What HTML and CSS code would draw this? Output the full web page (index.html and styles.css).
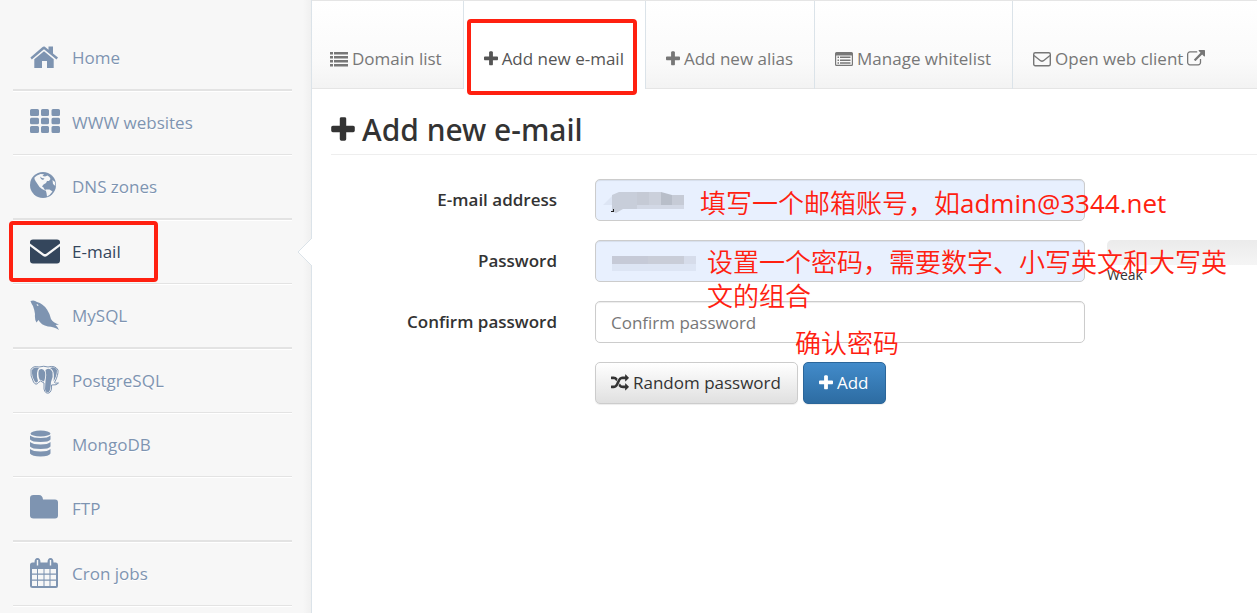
FILE: index.html
```html
<!DOCTYPE html>
<html lang="en">
<head>
<meta charset="UTF-8" />
<meta name="viewport" content="width=device-width, initial-scale=1" />
<title>Add new e-mail</title>
<link rel="stylesheet" href="styles.css">
</head>
<body>

<!-- shared icons -->
<svg class="sprite" aria-hidden="true">
  <symbol id="plus" viewBox="0 0 1408 1792"><path d="M1408 736v192q0 40-28 68t-68 28h-416v416q0 40-28 68t-68 28h-192q-40 0-68-28t-28-68v-416h-416q-40 0-68-28t-28-68v-192q0-40 28-68t68-28h416v-416q0-40 28-68t68-28h192q40 0 68 28t28 68v416h416q40 0 68 28t28 68z"/></symbol>
  <symbol id="list" viewBox="0 0 18 18"><path d="M0 2h3v2.500H0zM4 2h14v2.500H4zM0 6h3v2.500H0zM4 6h14v2.500H4zM0 10h3v2.500H0zM4 10h14v2.500H4zM0 14h3v2.500H0zM4 14h14v2.500H4z"/></symbol>
</svg>

<div class="page">
  <nav class="sidebar">
    <ul class="menu">
      <li class="thick"><a href="#">
        <svg viewBox="0 0 30 30"><path d="M14 9.200L23.700 17.200V26H17V19H12V26H4.300V17.200ZM14 4L18.500 7.700V4.500H23V11.400L28 15.600L26.500 17.400L14 7.200L1.800 17.400L.4 15.600L12 5.500Q14 3.500 16 5.500Z"/></svg>
        Home</a></li>
      <li><a href="#">
        <svg viewBox="0 0 30 30"><path d="M1.500 2h6q1.500 0 1.500 1.500v4q0 1.500-1.500 1.500h-6Q0 9 0 7.500v-4Q0 2 1.500 2zm11 0h5q1.500 0 1.500 1.500v4q0 1.500-1.500 1.500h-5q-1.500 0-1.500-1.500v-4q0-1.500 1.500-1.500zm10.500 0h5.500q1.500 0 1.500 1.500v4q0 1.500-1.500 1.500H23q-1.500 0-1.500-1.500v-4Q21.500 2 23 2z"/><path transform="translate(0 8.700)" d="M1.500 2h6q1.500 0 1.500 1.500v3.500q0 1.500-1.500 1.500h-6Q0 8.500 0 7v-3.500Q0 2 1.500 2zm11 0h5q1.500 0 1.500 1.500v3.500q0 1.500-1.500 1.500h-5q-1.500 0-1.500-1.500v-3.500q0-1.500 1.500-1.500zm10.500 0h5.500q1.500 0 1.500 1.500v3.500q0 1.500-1.500 1.500H23q-1.500 0-1.500-1.500v-3.500Q21.500 2 23 2z"/><path transform="translate(0 17)" d="M1.500 2h6q1.500 0 1.500 1.500v4q0 1.500-1.500 1.500h-6Q0 9 0 7.500v-4Q0 2 1.500 2zm11 0h5q1.500 0 1.500 1.500v4q0 1.500-1.500 1.500h-5q-1.500 0-1.500-1.500v-4q0-1.500 1.500-1.500zm10.500 0h5.500q1.500 0 1.500 1.500v4q0 1.500-1.500 1.500H23q-1.500 0-1.500-1.500v-4Q21.500 2 23 2z"/></svg>
        WWW websites</a></li>
      <li class="thick"><a href="#">
        <svg viewBox="0 0 30 30"><circle cx="13" cy="14" r="13"/><path class="cut" d="M4.500 6.500L7 4.500 10.500 3 14 3.200 12.500 5 15 5.500 17.500 4.500 19.500 6 20.500 8 19 10 17 10 16 12 13.500 13.500 12 15.500 13.500 16.500 14.500 18.500 17 20 15 19.500 12 18 9.500 16 7.500 13 5.500 10 4.500 8ZM15.500 18.500L19.500 18.500 22.500 20.500 19.500 24 17 25.500 16.500 22ZM22.500 9L25 11 25.300 15 23 13Z"/><path d="M10 5.500L12 7 14.500 7.500 13 9 11 8Z"/></svg>
        DNS zones</a></li>
      <li class="active"><a href="#">
        <svg viewBox="0 0 30 30"><path d="M3 3.500H27Q30 3.500 30 6V7.500L16.500 17.500Q15 18.500 13.500 17.500L0 7.500V6Q0 3.500 3 3.500ZM0 10.200L13 20Q15 21.300 17 20L30 10.200V24.500Q30 27.500 27 27.500H3Q0 27.500 0 24.500Z"/></svg>
        E-mail</a>
        <svg class="pointer" viewBox="0 0 15 28"><path d="M15 0L1 14L15 28"/></svg>
        <span class="mark mark-menu"></span></li>
      <li class="thick"><a href="#">
        <svg viewBox="0 0 30 30"><path d="M.5 1Q4-.5 7 2Q13 3.500 17 9.500Q20 14 21 19Q23 22.500 29 24.500L25.500 25Q28 27 29 30Q24 26.500 18 26.500Q11 25 8.500 20L6.500 22.500Q4.500 20 5 14Q4.500 10 3 6Q1.500 4 .5 1Z"/><path class="cut" d="M6.500 4.500Q8 3.800 8.500 5.800Q7.200 6.300 6.500 4.500Z"/></svg>
        MySQL</a></li>
      <li><a href="#">
        <svg viewBox="0 0 30 30"><path class="outline" d="M9 2Q3 .5 1 4.500Q0 11 3.500 17Q6 21 8.500 17.500L10.500 16L14 18V24Q15 29 19 28Q22 26.500 21.500 20Q27 20.500 28.500 18Q25 18.500 24.500 17.500Q28.500 10 28 5Q25 0 18 2Q14 .5 9 2Z"/><path d="M9 3Q4 1.500 2 5Q1.500 11 4.500 16Q6.500 19 8 16Q6.500 12 7 8Q7 5 9 3ZM9 5Q13 2.500 15 7Q16 11 14 16.500L9.500 14.500Q7.500 9 9 5ZM15.500 5Q20 1.500 22.500 7Q23.500 12 21 17Q20.500 25 19 27Q15.500 28 15 24L15.500 16Q17 10 15.500 5ZM20 3Q25 1 27 5Q27 11 23.500 16.500Q24.500 9 23 6Q22 4 20 3Z"/></svg>
        PostgreSQL</a></li>
      <li><a href="#">
        <svg viewBox="0 0 30 30"><ellipse cx="10.500" cy="4.500" rx="10" ry="3"/><path d="M0 6.500Q3 9 10.500 9Q18 9 20.500 6.500V10.500Q19 13 10.500 13Q2 13 0 10.500ZM0 13Q3 15.500 10.500 15.500Q18 15.500 20.500 13V17.500Q19 20 10.500 20Q2 20 0 17.500ZM0 20Q3 22.500 10.500 22.500Q18 22.500 20.500 20V24.500Q19 27.500 10.500 27.500Q2 27.500 0 24.500Z"/></svg>
        MongoDB</a></li>
      <li class="thick"><a href="#">
        <svg viewBox="0 0 30 30"><path d="M3.500 2H9Q12.500 2 13 6.500H25Q28 6.500 28 9.500V22.500Q28 25.500 25 25.500H3.500Q0 25.500 0 22.500V5Q0 2 3.500 2Z"/></svg>
        FTP</a></li>
      <li><a href="#">
        <svg viewBox="0 0 30 30"><path fill-rule="evenodd" d="M2.500 4.500H4.500Q4.500 0 7.500 0Q10.500 0 10.500 4.500H17.500Q17.500 0 20.500 0Q23.500 0 23.500 4.500H26Q28 4.500 28 7V28Q28 30 26 30H2.500Q0 30 0 28V7Q0 4.500 2.500 4.500ZM6.800 2V7.500H8.200V2ZM19.800 2V7.500H21.200V2ZM2 11V15.500H7V11ZM8 11V15.500H13.500V11ZM14.500 11V15.500H19.500V11ZM20.500 11V15.500H26V11ZM2 16.700V21.500H7V16.700ZM8 16.700V21.500H13.500V16.700ZM14.500 16.700V21.500H19.500V16.700ZM20.500 16.700V21.500H26V16.700ZM2 22.700V28H7V22.700ZM8 22.700V28H13.500V22.700ZM14.500 22.700V28H19.500V22.700ZM20.500 22.700V28H26V22.700Z"/></svg>
        Cron jobs</a></li>
    </ul>
  </nav>

  <main class="main">
    <div class="tabs">
      <a href="#"><svg class="icon"><use href="#list"/></svg>Domain list</a>
      <a href="#" class="active"><svg class="icon small"><use href="#plus"/></svg>Add new e-mail<span class="mark mark-tab"></span></a>
      <a href="#"><svg class="icon small"><use href="#plus"/></svg>Add new alias</a>
      <a href="#"><svg class="icon" viewBox="0 0 18 18"><path fill-rule="evenodd" d="M1.500 2H16.500Q18 2 18 3.500V14.500Q18 16 16.500 16H1.500Q0 16 0 14.500V3.500Q0 2 1.500 2ZM1.200 5.500V14.800H16.800V5.500ZM2.500 6.500H4V8H2.500ZM5 6.500H15.500V8H5ZM2.500 9.500H4V11H2.500ZM5 9.500H15.500V11H5ZM2.500 12.300H4V13.700H2.500ZM5 12.300H15.500V13.700H5Z"/></svg>Manage whitelist</a>
      <a href="#"><svg class="icon line" viewBox="0 0 18 18"><rect x=".7" y="2.700" width="16.600" height="13" rx="1.500"/><path d="M1 5.500L7.500 10.700Q9 11.700 10.500 10.700L17 5.500"/></svg>Open web client<svg class="icon after" viewBox="0 0 1792 1792"><path d="M1408 928v320q0 119-84.500 203.500t-203.500 84.500h-832q-119 0-203.500-84.500t-84.500-203.500v-832q0-119 84.500-203.500t203.500-84.500h704q14 0 23 9t9 23v64q0 14-9 23t-23 9h-704q-66 0-113 47t-47 113v832q0 66 47 113t113 47h832q66 0 113-47t47-113v-320q0-14 9-23t23-9h64q14 0 23 9t9 23zm384-864v512q0 26-19 45t-45 19-45-19l-176-176-652 652q-10 10-23 10t-23-10l-114-114q-10-10-10-23t10-23l652-652-176-176q-19-19-19-45t19-45 45-19h512q26 0 45 19t19 45z"/></svg></a>
    </div>

    <div class="content">
      <h3><svg class="icon"><use href="#plus"/></svg>Add new e-mail</h3>

      <form>
        <div class="row">
          <label for="email">E-mail address</label>
          <div class="field">
            <input type="text" id="email" class="filled" />
            <svg class="hidden-value" viewBox="0 0 90 24"><path fill="#dde5f4" d="M0 16L10 6V16Z"/><path fill="#c8ceda" d="M9 6L16 3H34V20H20L13 24L9 22Z"/><path fill="#c5cad5" d="M34 3H46V16H34Z"/><path fill="#cbd0db" d="M46 3H58V16H46Z"/><path fill="#b8bec9" d="M58 3L69 6V16H58Z"/><path fill="#c6cbd6" d="M69 6H81V16H69Z"/><path fill="#d2d8e5" d="M34 16H81V20H34Z"/><path fill="#222" d="M8 22H10V20H11V23H8Z"/></svg>
            <span class="note note-email">填写一个邮箱账号，如<span class="latin">admin@3344.net</span></span>
          </div>
        </div>
        <div class="row">
          <label for="password">Password</label>
          <div class="field">
            <input type="password" id="password" class="filled" />
            <svg class="hidden-value" viewBox="0 0 90 24"><path fill="#c6cad7" d="M9 6H45V14H9Z"/><path fill="#c9cdd8" d="M45 6H81V14H45Z"/><path fill="#d6dcea" d="M81 6H93V14H81Z"/><path fill="#dde5f4" d="M9 14H93V21H9Z"/></svg>
            <span class="note note-password">设置一个密码，需要数字、小写英文和大写英文的组合</span>
          </div>
          <div class="strength">
            <div class="bar"></div>
            <span>Weak</span>
          </div>
        </div>
        <div class="row">
          <label for="confirm">Confirm password</label>
          <div class="field">
            <input type="password" id="confirm" placeholder="Confirm password" />
            <span class="note note-confirm">确认密码</span>
          </div>
        </div>
        <div class="row">
          <div class="buttons">
            <button type="button" class="btn"><svg class="icon" viewBox="0 0 1792 1792"><path d="M666 481q-60 92-137 273-22-45-37-72.500t-40.500-63.500-51-56.500-63-35-81.500-14.500h-224q-14 0-23-9t-9-23v-192q0-14 9-23t23-9h224q250 0 410 225zm1126 799q0 14-9 23l-320 320q-9 9-23 9-13 0-22.500-9.500t-9.500-22.500v-192q-32 0-85 .5t-81 1-73-1-71-5-64-10.500-63-18.500-58-28.500-59-40-55-53.500-56-69.500q59-93 136-273 22 45 37 72.500t40.500 63.500 51 56.500 63 35 81.500 14.500h256v-192q0-14 9-23t23-9q12 0 24 10l319 319q9 9 9 23zm0-896q0 14-9 23l-320 320q-9 9-23 9-13 0-22.500-9.500t-9.500-22.500v-192h-256q-48 0-87 15t-69 45-51 61.500-45 77.500q-32 62-78 171-29 66-49.500 111t-54 105-64 100-74 83-90 68.500-106.500 42-128 16.500h-224q-14 0-23-9t-9-23v-192q0-14 9-23t23-9h224q48 0 87-15t69-45 51-61.500 45-77.500q32-62 78-171 29-66 49.500-111t54-105 64-100 74-83 90-68.500 106.500-42 128-16.500h256v-192q0-14 9-23t23-9q12 0 24 10l319 319q9 9 9 23z"/></svg>Random password</button>
            <button type="submit" class="btn primary"><svg class="icon small"><use href="#plus"/></svg>Add</button>
          </div>
        </div>
      </form>
    </div>
  </main>
</div>

</body>
</html>
```

FILE: styles.css
```css
* {
  box-sizing: border-box;
}

body {
  margin: 0;
  background: #fff;
  color: #333;
  font-family: "Open Sans", "Noto Sans CJK SC", sans-serif;
  font-size: 17px;
  line-height: 24px;
  overflow-x: hidden;
}

a {
  color: inherit;
  text-decoration: none;
}

.sprite {
  display: none;
}

.page {
  display: flex;
  min-height: 100vh;
}

/* sidebar */
.sidebar {
  flex: none;
  width: 312px;
  padding: 26px 19px 0 13px;
  background: linear-gradient(to left, #f0f0f0, #f7f7f7 8px);
  border-right: 1px solid #dbe3e9;
}

.menu {
  list-style: none;
  margin: 0;
  padding: 0;
}

.menu li {
  position: relative;
  border-bottom: 1px solid #e3e3e3;
  box-shadow: 0 1px 0 #fff;
}

.menu li.thick {
  border-bottom-width: 2px;
}

.menu a {
  display: flex;
  align-items: center;
  gap: 12px;
  height: 63px;
  padding: 1px 0 0 17px;
  color: #7e94b1;
  text-shadow: 0 1px 0 #fff;
}

.menu a svg {
  width: 30px;
  height: 30px;
  margin-bottom: 2px;
  fill: #7e94b1;
}

.menu .cut {
  fill: #f7f7f7;
}

.menu .outline {
  fill: #f7f7f7;
  stroke: #7e94b1;
}

.menu .active a {
  color: #34465c;
}

.menu .active a svg {
  fill: #34465c;
}

.menu .pointer {
  position: absolute;
  top: 18px;
  right: -20px;
  width: 15px;
  height: 28px;
  fill: #fff;
  stroke: #dbe3e9;
}

/* tabs */
.tabs {
  display: flex;
  height: 89px;
  border-top: 1px solid #e5e5e5;
  border-bottom: 1px solid #e5e5e5;
  background: linear-gradient(#fff, #fafafa 70%, #f3f3f3);
}

.tabs a {
  position: relative;
  display: flex;
  align-items: center;
  height: 88px;
  padding: 28px 21px 0 20px;
  border-right: 1px solid #dbe3e9;
  color: #777;
  white-space: nowrap;
}

.tabs a:first-child {
  padding-left: 18px;
}

.tabs a:last-child {
  border-right: none;
}

.tabs .active {
  background: #fff;
  color: #555;
}

.icon {
  flex: none;
  width: 18px;
  height: 18px;
  margin-right: 4px;
  fill: currentColor;
}

.icon.small {
  width: 14px;
}

.icon.after {
  margin: 0 0 0 4px;
}

.icon.line {
  fill: none;
  stroke: currentColor;
  stroke-width: 1.4;
}

/* content */
.main {
  flex: 1;
  min-width: 0;
}

.content {
  padding: 22px 0 0 19px;
}

h3 {
  display: flex;
  align-items: center;
  margin: 0 0 24px;
  padding-bottom: 5px;
  border-bottom: 1px solid #eee;
  font-family: "Noto Sans", "Open Sans", sans-serif;
  font-size: 30px;
  font-weight: 500;
  line-height: 38px;
}

h3 .icon {
  width: 24px;
  height: 30px;
  margin-right: 7px;
}

.row {
  display: grid;
  grid-template-columns: 242fr 490fr 150fr;
  gap: 22px;
  margin-bottom: 19px;
}

.row label {
  padding: 9px 16px 0 0;
  text-align: right;
  font-weight: 600;
}

.field {
  position: relative;
}

.field input {
  display: block;
  width: 100%;
  height: 42px;
  padding: 8px 15px;
  border: 1px solid #ccc;
  border-radius: 5px;
  background: #fff;
  box-shadow: inset 0 1px 1px rgba(0, 0, 0, 0.075);
  color: #555;
  font: inherit;
}

.field .filled {
  background: #e8f0fe;
}

.field input::placeholder {
  color: #777;
}

.hidden-value {
  position: absolute;
  top: 10px;
  left: 8px;
  width: 90px;
  height: 24px;
  overflow: visible;
}

.strength {
  height: 42px;
  font-size: 14px;
  line-height: 20px;
}

.bar {
  height: 25px;
  border-radius: 5px 0 0 5px;
  background: linear-gradient(#ebebeb, #f5f5f5);
}

.buttons {
  grid-column: 2;
  display: flex;
  gap: 5px;
}

.btn {
  display: flex;
  align-items: center;
  height: 42px;
  padding: 0 16px 0 15px;
  border: 1px solid #ccc;
  border-radius: 5px;
  background: linear-gradient(#fff, #e0e0e0);
  box-shadow: 0 1px 1px rgba(0, 0, 0, 0.075);
  color: #333;
  font: inherit;
  cursor: pointer;
}

.btn.primary {
  border-color: #2b669a;
  background: linear-gradient(#428bca, #2d6ca2);
  color: #fff;
}

/* red hints */
.mark {
  position: absolute;
  border: 4px solid #ff2010;
  border-radius: 4px;
}

.mark-menu {
  top: 1px;
  left: -4px;
  width: 149px;
  height: 61px;
}

.mark-tab {
  top: 18px;
  left: 3px;
  right: 8px;
  height: 76px;
}

.note {
  position: absolute;
  color: #ff2010;
  font-size: 26px;
  font-weight: 350;
  line-height: 34px;
  pointer-events: none;
}

.note .latin {
  font-weight: 400;
}

.note-email {
  top: 7px;
  left: 105px;
  white-space: nowrap;
}

.note-password {
  z-index: 1;
  top: 5px;
  left: 112px;
  width: 522px;
}

.note-confirm {
  top: 25px;
  left: 200px;
}
```
